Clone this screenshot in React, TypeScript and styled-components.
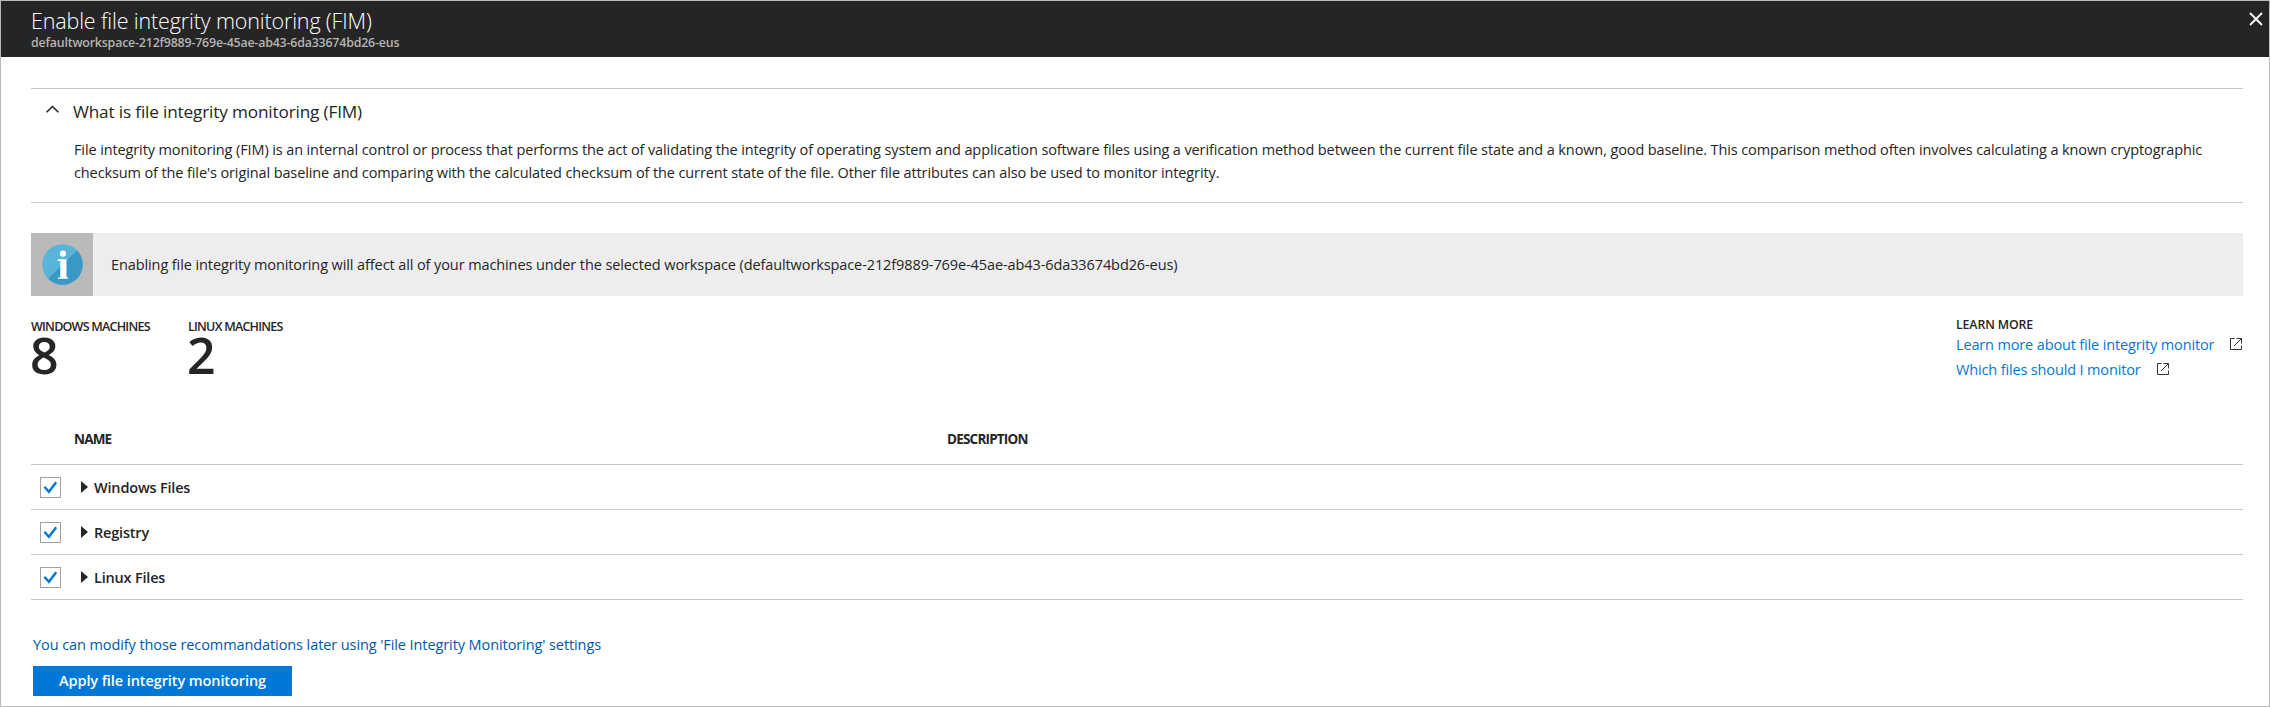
import React, { useState } from 'react';
import styled, { createGlobalStyle } from 'styled-components';

const GlobalStyle = createGlobalStyle`
  * { box-sizing: border-box; }
  body {
    margin: 0;
    background: #fff;
    color: #252525;
    font-family: 'Open Sans', 'Noto Sans', sans-serif;
    font-size: 14.5px;
  }
  h1, h2, h3, p { margin: 0; font-weight: 400; }
`;

const Blade = styled.div`
  display: flex;
  flex-direction: column;
  height: 707px;
  border: 1px solid #bababa;
`;

const BladeHeader = styled.header`
  display: flex;
  justify-content: space-between;
  align-items: flex-start;
  height: 56px;
  padding: 5px 6px 0 30px;
  background: #252525;
`;

const Title = styled.h1`
  color: #fff;
  font-size: 21.5px;
  font-weight: 300;
  line-height: 29px;
  letter-spacing: -0.15px;
`;

const Subtitle = styled.p`
  color: #b4b4b4;
  font-size: 12.4px;
  font-weight: 600;
  line-height: 16px;
  letter-spacing: -0.19px;
`;

const CloseButton = styled.button`
  display: flex;
  margin-top: 6px;
  padding: 0;
  border: 0;
  background: none;
`;

const Content = styled.main`
  padding: 31px 26px 0 30px;
`;

const About = styled.section`
  height: 115px;
  padding: 11px 0 0 15px;
  border-top: 1px solid #c4c8d0;
  border-bottom: 1px solid #c4c8d0;
`;

const AboutHeading = styled.div`
  display: flex;
  height: 24px;
  gap: 14px;

  svg { margin-top: 5px; }
`;

const AboutTitle = styled.h2`
  font-size: 17.2px;
  line-height: 24px;
  letter-spacing: -0.16px;
`;

const AboutText = styled.p`
  margin: 14px 0 0 28px;
  line-height: 23px;
  letter-spacing: -0.114px;
  white-space: nowrap;
`;

const Banner = styled.div`
  display: flex;
  align-items: center;
  height: 63px;
  margin-top: 30px;
  background: #ededed;
  letter-spacing: -0.099px;
`;

const BannerIcon = styled.div`
  display: flex;
  align-items: center;
  justify-content: center;
  width: 62px;
  height: 63px;
  margin-right: 18px;
  background: #bababa;
`;

const Summary = styled.section`
  display: flex;
  height: 133px;
  padding-top: 21px;
`;

const Stat = styled.div`
  width: 157px;
  padding-top: 2px;
`;

const StatLabel = styled.div`
  font-size: 12.5px;
  font-weight: 600;
  line-height: 16px;
  letter-spacing: -0.76px;
`;

const StatValue = styled.div`
  margin-left: -1px;
  font-size: 50px;
  font-weight: 600;
  line-height: 40px;
`;

const LearnMore = styled.div`
  width: 287px;
  margin-left: auto;
`;

const LearnTitle = styled.h3`
  font-size: 12.3px;
  font-weight: 600;
  line-height: 15px;
  letter-spacing: -0.1px;
`;

const LearnLink = styled.a`
  display: flex;
  gap: 16px;
  color: #0078d7;
  line-height: 25px;
  letter-spacing: -0.145px;

  svg { margin-top: 6px; }
`;

const Table = styled.div`
  display: flex;
  flex-direction: column;
`;

const TableHead = styled.div`
  display: grid;
  grid-template-columns: 43px 873px 1fr;
  height: 36px;
  border-bottom: 1px solid #c8c8c8;
  font-size: 13.5px;
  font-weight: 700;
  line-height: 20px;
  letter-spacing: -0.8px;
`;

const Row = styled.div`
  display: flex;
  align-items: center;
  height: 45px;
  padding-left: 9px;
  border-bottom: 1px solid #c8c8c8;
  font-weight: 600;
  letter-spacing: -0.19px;
`;

const Checkbox = styled.button`
  display: flex;
  align-items: center;
  justify-content: center;
  width: 21px;
  height: 21px;
  margin: 1px 20px 0 0;
  padding: 0;
  border: 1px solid #a0a0a0;
  background: #fff;
`;

const Arrow = styled.span`
  width: 0;
  height: 0;
  margin-right: 6px;
  border-style: solid;
  border-width: 6.5px 0 6.5px 7px;
  border-color: transparent transparent transparent #252525;
`;

const SettingsLink = styled.a`
  display: block;
  margin: 35px 0 11px 2px;
  color: #0058ad;
  line-height: 20px;
  letter-spacing: -0.09px;
`;

const ApplyButton = styled.button`
  width: 259px;
  height: 30px;
  margin-left: 2px;
  padding: 0;
  border: 0;
  background: #0078d7;
  color: #fff;
  font: 600 14.5px/30px 'Open Sans', sans-serif;
  letter-spacing: -0.087px;
`;

const CloseIcon = () => (
  <svg width="14" height="14" viewBox="0 0 14 14" fill="none" stroke="#fff" strokeWidth="1.8">
    <path d="M1 1l12 12M13 1L1 13" />
  </svg>
);

const ChevronUp = () => (
  <svg width="13" height="8" viewBox="0 0 13 8" fill="none" stroke="#252525" strokeWidth="1.6">
    <path d="M.6 7.3l5.9-5.8 5.9 5.8" />
  </svg>
);

const InfoIcon = () => (
  <svg width="41" height="41" viewBox="0 0 41 41">
    <circle cx="20.5" cy="20.5" r="20.2" fill="#59b4d9" />
    <path d="M34.8 6.2A20.2 20.2 0 0 1 6.2 34.8z" fill="#3999c6" />
    <circle cx="21" cy="9.7" r="3.1" fill="#fff" />
    <path d="M15.8 15.2h8.7v18.2h1.7v1.3H15.8v-1.3h2.5V16.9h-2.5z" fill="#fff" />
  </svg>
);

const ExternalIcon = () => (
  <svg width="12" height="12" viewBox="0 0 12 12" fill="none" stroke="#333" strokeWidth="1">
    <path d="M4.5 .5h-4v11h11v-4M6.5 .5h5v5M11.3 .7L4 8" />
  </svg>
);

const CheckIcon = () => (
  <svg width="15" height="13" viewBox="0 0 15 13" fill="none" stroke="#0078d7" strokeWidth="2.4">
    <path d="M1.4 5.8l4.5 5L13.2 1.2" />
  </svg>
);

const stats = [
  { label: 'WINDOWS MACHINES', value: 8 },
  { label: 'LINUX MACHINES', value: 2 },
];

const links = ['Learn more about file integrity monitor', 'Which files should I monitor'];

const groups = ['Windows Files', 'Registry', 'Linux Files'];

export default function App() {
  const [checked, setChecked] = useState<Record<string, boolean>>({
    'Windows Files': true,
    Registry: true,
    'Linux Files': true,
  });

  return (
    <>
      <GlobalStyle />
      <Blade>
        <BladeHeader>
          <div>
            <Title>Enable file integrity monitoring (FIM)</Title>
            <Subtitle>defaultworkspace-212f9889-769e-45ae-ab43-6da33674bd26-eus</Subtitle>
          </div>
          <CloseButton aria-label="Close">
            <CloseIcon />
          </CloseButton>
        </BladeHeader>
        <Content>
          <About>
            <AboutHeading>
              <ChevronUp />
              <AboutTitle>What is file integrity monitoring (FIM)</AboutTitle>
            </AboutHeading>
            <AboutText>
              File integrity monitoring (FIM) is an internal control or process that performs the act of validating the
              integrity of operating system and application software files using a verification method between the
              current file state and a known, good baseline. This comparison method often involves calculating a known
              cryptographic
              <br />
              checksum of the file's original baseline and comparing with the calculated checksum of the current state
              of the file. Other file attributes can also be used to monitor integrity.
            </AboutText>
          </About>
          <Banner>
            <BannerIcon>
              <InfoIcon />
            </BannerIcon>
            Enabling file integrity monitoring will affect all of your machines under the selected workspace
            (defaultworkspace-212f9889-769e-45ae-ab43-6da33674bd26-eus)
          </Banner>
          <Summary>
            {stats.map((s) => (
              <Stat key={s.label}>
                <StatLabel>{s.label}</StatLabel>
                <StatValue>{s.value}</StatValue>
              </Stat>
            ))}
            <LearnMore>
              <LearnTitle>LEARN MORE</LearnTitle>
              {links.map((l) => (
                <LearnLink key={l}>
                  {l}
                  <ExternalIcon />
                </LearnLink>
              ))}
            </LearnMore>
          </Summary>
          <Table>
            <TableHead>
              <span />
              <span>NAME</span>
              <span>DESCRIPTION</span>
            </TableHead>
            {groups.map((g) => (
              <Row key={g}>
                <Checkbox
                  role="checkbox"
                  aria-checked={checked[g]}
                  aria-label={g}
                  onClick={() => setChecked({ ...checked, [g]: !checked[g] })}
                >
                  {checked[g] && <CheckIcon />}
                </Checkbox>
                <Arrow />
                {g}
              </Row>
            ))}
          </Table>
          <SettingsLink>
            You can modify those recommandations later using 'File Integrity Monitoring' settings
          </SettingsLink>
          <ApplyButton>Apply file integrity monitoring</ApplyButton>
        </Content>
      </Blade>
    </>
  );
}
